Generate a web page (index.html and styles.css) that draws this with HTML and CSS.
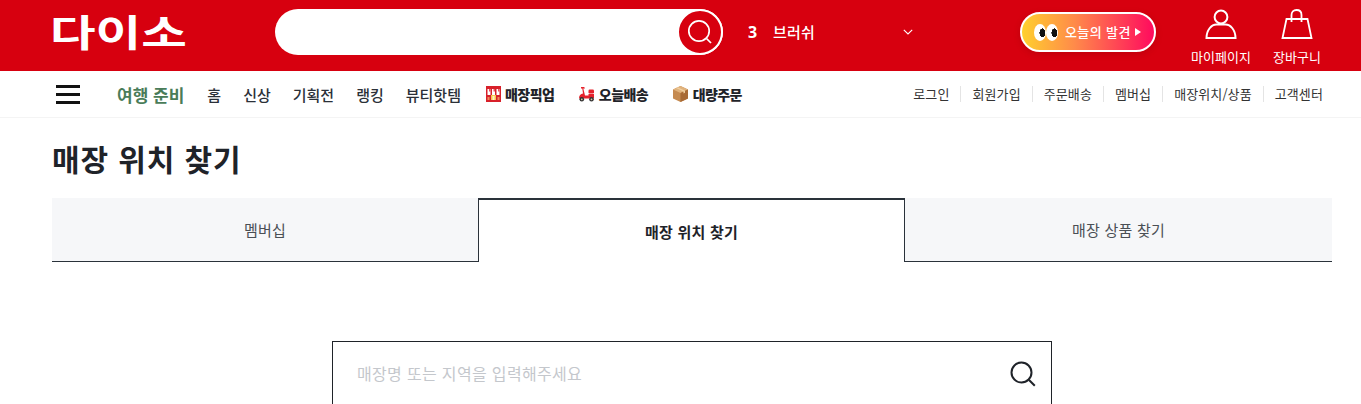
FILE: index.html
```html
<!DOCTYPE html>
<html lang="ko">
<head>
<meta charset="utf-8">
<title>매장 위치 찾기</title>
<link rel="stylesheet" href="styles.css">
</head>
<body>
<header class="top">
  <a class="logo"><span class="logo-text">다이소</span></a>
  <div class="search">
    <button class="search-btn" aria-label="검색">
      <svg width="28" height="28" viewBox="0 0 28 28" fill="none" stroke="#fff" stroke-width="1.7"><circle cx="13" cy="13" r="10.2"/><path d="M20.5 20.5l4.5 4.5"/></svg>
    </button>
  </div>
  <div class="rank"><b class="rank-no">3</b><span class="rank-word">브러쉬</span>
    <svg class="chev" width="10" height="6" viewBox="0 0 10 6" fill="none" stroke="#fff" stroke-width="1.1"><path d="M.8.8L5 5l4.2-4.200"/></svg>
  </div>
  <a class="today">
    <span class="eyes"><i class="eye"></i><i class="eye"></i></span>
    <span class="today-text">오늘의 발견</span>
    <i class="tri"></i>
  </a>
  <a class="util util-my">
    <svg width="32" height="32" viewBox="0 0 32 32" fill="none" stroke="#fff" stroke-width="2"><circle cx="16" cy="9" r="6.4"/><path d="M1.500 30c0-8 5-13.500 10-13.500h9c5 0 10 5.500 10 13.500z"/></svg>
    <span>마이페이지</span>
  </a>
  <a class="util util-cart">
    <svg width="32" height="32" viewBox="0 0 32 32" fill="none" stroke="#fff" stroke-width="1.800"><path d="M5.500 11h21l4 19h-29z"/><path d="M10.500 14V7c0-3 2-5 5-5s5 2 5 5v7"/></svg>
    <span>장바구니</span>
  </a>
</header>

<nav class="gnb">
  <button class="burger" aria-label="메뉴"><i></i><i></i><i></i></button>
  <a class="gnb-season">여행 준비</a>
  <ul class="gnb-list">
    <li>홈</li><li>신상</li><li>기획전</li><li>랭킹</li><li>뷰티핫템</li>
  </ul>
  <ul class="gnb-special">
    <li>
      <svg width="15" height="16" viewBox="0 0 15 16"><rect width="15" height="16" fill="#d8202a"/><path d="M1.500 3h3v6h-3zM6 3h3v6H6zM10.500 3h3v6h-3z" fill="#fff"/><path d="M3 3h1.500v2.500H3zM7.500 3H9v2.500H7.500zM12 3h1.500v2.500H12z" fill="#e8505a"/><path d="M5 9h5v5H5z" fill="#f6c850"/><path d="M6.500 10h2v4h-2z" fill="#fff3c4"/><path d="M1.500 11h2v3h-2zM11.500 11h2v3h-2z" fill="#f08a5a"/></svg>
      매장픽업
    </li>
    <li>
      <svg width="17" height="16" viewBox="0 0 17 16"><path d="M3 1h3.200l.8 1.500H5.300l1.700 7h3.500V8H16v4.500H1C1 9.500 2.500 8 5 7.500L4.300 2.500H3z" fill="#e5222c"/><rect x="10.500" y="3.500" width="5.500" height="4" rx="1.200" fill="#e5222c"/><circle cx="3.800" cy="13.300" r="2.300" fill="#333"/><circle cx="3.800" cy="13.300" r=".9" fill="#d8c9a8"/><circle cx="13.500" cy="13.300" r="2.300" fill="#333"/><circle cx="13.500" cy="13.300" r=".9" fill="#d8c9a8"/></svg>
      오늘배송
    </li>
    <li>
      <svg width="17" height="16" viewBox="0 0 17 16"><path d="M8.500 0l7.500 3.500v9L8.500 16 1 12.500v-9z" fill="#c58a50"/><path d="M8.500 0L16 3.500 8.500 7 1 3.500z" fill="#e0b27c"/><path d="M8.500 7L16 3.500v9L8.500 16z" fill="#a86a35"/><path d="M4 2l7.500 3.500v2l1.500-.7v-2L5.500 1.300z" fill="#f0cfa0"/></svg>
      대량주문
    </li>
  </ul>
  <ul class="gnb-util">
    <li>로그인</li><li>회원가입</li><li>주문배송</li><li>멤버십</li><li>매장위치/상품</li><li>고객센터</li>
  </ul>
</nav>

<main class="page">
  <h1 class="title">매장 위치 찾기</h1>
  <div class="tabs">
    <a class="tab">멤버십</a>
    <a class="tab tab-on">매장 위치 찾기</a>
    <a class="tab">매장 상품 찾기</a>
  </div>
  <div class="finder">
    <span class="finder-ph">매장명 또는 지역을 입력해주세요</span>
    <svg width="28" height="28" viewBox="0 0 28 28" fill="none" stroke="#1f2329" stroke-width="2"><circle cx="12.500" cy="12.500" r="10"/><path d="M19.800 19.800l6 6"/></svg>
  </div>
</main>
</body>
</html>
```

FILE: styles.css
```css
* { box-sizing: border-box; margin: 0; padding: 0; }
html, body { height: 404px; overflow: hidden; }
body { font-family: "Noto Sans CJK KR", "Noto Sans", sans-serif; color: #1f2329; background: #fff; }
ul { list-style: none; }
i { display: block; }
button { border: 0; background: none; }

.top { height: 71px; background: #d7000f; display: flex; align-items: flex-start; color: #fff; }
.logo { width: 134px; margin: 5px 0 0 52px; font-size: 37px; line-height: 52px; font-weight: 700; white-space: nowrap; }
.logo-text { display: inline-block; transform: translateX(-2px) scaleX(1.34); transform-origin: 0 50%; }
.search { width: 448px; height: 46px; margin: 9px 0 0 89px; background: #fff; border-radius: 23px; display: flex; justify-content: flex-end; }
.search-btn { width: 46px; height: 46px; border-radius: 50%; background: #d7000f; border: 2px solid #fff; display: flex; align-items: center; justify-content: center; }
.rank { width: 168px; height: 20px; margin: 22px 0 0 24px; display: flex; align-items: center; font-size: 15px; line-height: 20px; }
.rank-no { width: 25px; margin-left: 1px; font-family: "Noto Sans", sans-serif; font-size: 16px; font-weight: 700; }
.rank-word { font-weight: 500; letter-spacing: .2px; }
.chev { margin-left: auto; margin-right: 2px; }
.today { width: 136px; height: 40px; margin: 12px 0 0 105px; border: 2px solid #fff; border-radius: 20px; background: linear-gradient(90deg, #ffd02e 0%, #ff8a4a 40%, #ff0a5e 100%); display: flex; align-items: center; padding-left: 12px; box-shadow: 0 2px 6px rgba(120,0,0,.25); }
.eyes { display: flex; margin-right: 7px; }
.eye { width: 12px; height: 17px; border-radius: 50%; background: radial-gradient(ellipse 3px 4.500px at 70% 52%, #111 0 96%, #fff 100%); }
.today-text { font-size: 13px; line-height: 16px; font-weight: 500; color: #fff; white-space: nowrap; letter-spacing: .4px; }
.tri { margin-left: 4px; border-left: 6px solid #fff; border-top: 4px solid transparent; border-bottom: 4px solid transparent; }
.util { display: flex; flex-direction: column; align-items: center; font-size: 13px; line-height: 16px; white-space: nowrap; margin-top: 8px; }
.util span { margin-top: 9px; }
.util-my { margin-left: 35px; width: 60px; }
.util-cart { margin-left: 21px; width: 50px; }

.gnb { height: 47px; border-bottom: 1px solid #f4f4f4; display: flex; align-items: center; }
.burger { width: 24px; height: 19px; margin-left: 56px; display: flex; flex-direction: column; justify-content: space-between; }
.burger i { height: 3px; width: 24px; background: #111; }
.gnb-season { margin-left: 37px; font-size: 17px; font-weight: 700; color: #4a7c59; white-space: nowrap; }
.gnb-list { display: flex; gap: 22px; margin-left: 23px; font-size: 15px; font-weight: 500; color: #2b3038; white-space: nowrap; }
.gnb-special { display: flex; gap: 23.5px; margin-left: 25px; font-size: 14px; font-weight: 900; letter-spacing: -.55px; color: #1f2329; white-space: nowrap; }
.gnb-special li { display: flex; align-items: center; gap: 4px; }
.gnb-util { display: flex; margin-left: auto; margin-right: 27px; font-size: 13px; letter-spacing: .1px; color: #333; white-space: nowrap; }
.gnb-util li { padding: 0 11px; line-height: 16px; border-left: 1px solid #e4e4e4; }
.gnb-util li:first-child { border-left: 0; }

.page { width: 1280px; margin-left: 52px; }
.title { font-size: 30px; line-height: 44px; font-weight: 700; color: #1f2329; margin-top: 18px; letter-spacing: .9px; }
.tabs { display: grid; grid-template-columns: 426px 427px 427px; margin-top: 18px; height: 64px; }
.tab { display: flex; align-items: center; justify-content: center; background: #f6f7f9; border-bottom: 1px solid #2a323a; font-size: 15px; color: #4a4f55; letter-spacing: .2px; }
.tab-on { background: #fff; border: 1px solid #2a323a; border-top-width: 2px; border-bottom: 0; font-weight: 700; color: #1f2329; }
.finder { width: 720px; height: 70px; margin: 79px 0 0 280px; border: 1px solid #1f2329; display: flex; align-items: center; justify-content: space-between; padding: 0 14px 0 24px; }
.finder-ph { font-size: 16px; letter-spacing: .33px; color: #c4c7cc; margin-bottom: 6px; }
.finder svg { margin-bottom: 4px; }
```
